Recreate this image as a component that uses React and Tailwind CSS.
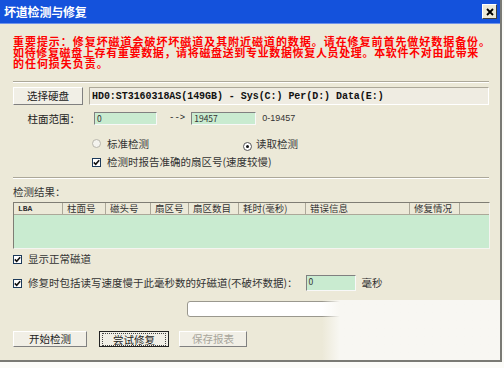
import React from 'react';

const cjk = { fontFamily: '"Noto Sans CJK SC", "Noto Sans", sans-serif' };
const mono = { fontFamily: '"Liberation Mono", "Noto Sans CJK SC", monospace' };

function Check({ checked = true }) {
  return (
    <span className="inline-flex w-[9px] h-[9px] border border-[#1c3a5a] bg-white items-center justify-center shrink-0">
      {checked && (
        <svg width="7" height="7" viewBox="0 0 7 7">
          <path d="M0.8 3.4 L2.7 5.3 L6.2 1.2" stroke="#111" strokeWidth="1.6" fill="none" />
        </svg>
      )}
    </span>
  );
}

function Radio({ on = false }) {
  return (
    <span className={`inline-flex w-[9px] h-[9px] rounded-full border items-center justify-center shrink-0 ${on ? 'border-[#555] bg-white' : 'border-[#b8b6ac] bg-[#f4f3ee]'}`}>
      {on && <span className="w-[3px] h-[3px] rounded-full bg-[#111]" />}
    </span>
  );
}

function XpButton({ children, focus = false, disabled = false, className = '' }) {
  return (
    <div
      className={`flex items-center justify-center bg-[#f1efe6] text-[10.5px] ${
        focus ? 'border border-[#222]' : 'border border-[#fff] border-r-[#808080] border-b-[#808080]'
      } ${disabled ? 'text-[#a8a69c]' : 'text-[#222]'} ${className}`}
    >
      <span className={focus ? 'px-[10px] border border-dotted border-[#444] leading-[11px]' : ''}>{children}</span>
    </div>
  );
}

function Field({ value, className = '' }) {
  return (
    <div className={`bg-[#c9ebd0] border border-t-[#808080] border-l-[#808080] border-r-[#f8f8f8] border-b-[#f8f8f8] text-[8.5px] text-[#333] pl-[2px] leading-[10px] ${className}`}>
      {value}
    </div>
  );
}

const cols = [
  ['LBA', 49],
  ['柱面号', 43],
  ['磁头号', 45],
  ['扇区号', 38],
  ['扇区数目', 50],
  ['耗时(毫秒)', 67],
  ['错误信息', 104],
  ['修复情况', 50],
];

export default function App() {
  return (
    <div className="w-[504px] h-[368px] bg-[#fbfbf8] relative overflow-hidden" style={cjk}>
      <div className="w-[502px] h-[362px] bg-[#ece9d8] border-r-2 border-b-2 border-[#7a7a74] flex flex-col">
        {/* title bar */}
        <div className="h-[24px] bg-[#1452dc] flex items-center justify-between pl-[4px] pr-[3px] border-b border-[#6f93ea] shrink-0">
          <span className="text-white text-[12px] font-bold tracking-[-0.2px]">坏道检测与修复</span>
          <div className="w-[15px] h-[15px] bg-[#ece9d8] border border-[#fff] border-r-[#404040] border-b-[#404040] flex items-center justify-center">
            <svg width="8" height="8" viewBox="0 0 8 8">
              <path d="M1 1 L7 7 M7 1 L1 7" stroke="#000" strokeWidth="1.8" />
            </svg>
          </div>
        </div>

        <div className="flex flex-col pl-[13px] pr-[11px]">
          {/* warning */}
          <div className="mt-[12px] text-[#ff0000] font-bold text-[11px] leading-[11px] tracking-[0.95px] whitespace-nowrap">
            <div>重要提示：修复坏磁道会破坏坏磁道及其附近磁道的数据。请在修复前首先做好数据备份。</div>
            <div className="tracking-[0.65px]">如待修复磁盘上存有重要数据，请将磁盘送到专业数据恢复人员处理。本软件不对由此带来</div>
            <div>的任何损失负责。</div>
          </div>

          <div className="mt-[12px] h-[2px] border-t border-[#aca899] border-b border-b-white" />

          {/* disk row */}
          <div className="mt-[4px] flex gap-[6px] h-[18px]">
            <XpButton className="w-[70px]">选择硬盘</XpButton>
            <div className="flex-1 flex items-center border border-[#aca899] border-r-white border-b-white bg-[#efece2] pl-[2px]">
              <span className="text-[10px] font-bold text-[#111] tracking-[-0.05px]" style={mono}>
                HD0:ST3160318AS(149GB) - Sys(C:) Per(D:) Data(E:)
              </span>
            </div>
          </div>

          {/* cylinder range */}
          <div className="mt-[7px] flex items-center h-[13px] text-[10.5px] text-[#222]">
            <span className="w-[67px] text-right">柱面范围：</span>
            <Field value="0" className="ml-[14px] w-[63px] h-[13px]" />
            <span className="ml-[12px] text-[9px]" style={mono}>--&gt;</span>
            <Field value="19457" className="ml-[6px] w-[65px] h-[13px]" />
            <span className="ml-[6px] text-[9px] text-[#333]" style={{ fontFamily: '"Liberation Sans", sans-serif' }}>0-19457</span>
          </div>

          {/* radios */}
          <div className="mt-[13px] flex items-center h-[12px] text-[10.5px] text-[#333]">
            <span className="ml-[79px]"><Radio /></span>
            <span className="ml-[6px]">标准检测</span>
            <span className="ml-[94px]"><Radio on /></span>
            <span className="ml-[4px]">读取检测</span>
          </div>

          {/* checkbox */}
          <div className="mt-[6px] flex items-center h-[12px] text-[10.5px] text-[#333]">
            <span className="ml-[79px]"><Check /></span>
            <span className="ml-[6px]">检测时报告准确的扇区号(速度较慢)</span>
          </div>

          <div className="mt-[9px] h-[2px] border-t border-[#aca899] border-b border-b-white" />

          {/* results */}
          <div className="mt-[7px] text-[10.5px] text-[#333] leading-[12px]">检测结果：</div>
          <div className="mt-[4px] w-[477px] h-[47px] border border-[#7f7d74] border-r-[#f4f4f0] border-b-[#f4f4f0] bg-[#c9ebd0] flex flex-col">
            <div className="h-[12px] flex bg-[#ece9d8] border-b border-[#aca899] shrink-0">
              {cols.map(([t, w]) => (
                <div
                  key={t}
                  className={`h-full flex items-center pl-[4px] border-r border-[#aca899] text-[9.5px] text-[#333] ${t === 'LBA' ? 'font-bold' : ''}`}
                  style={{ width: w, ...(t === 'LBA' ? mono : {}) }}
                >
                  {t === 'LBA' ? <span className="text-[8px]">LBA</span> : t}
                </div>
              ))}
            </div>
          </div>

          {/* options */}
          <div className="mt-[4px] flex items-center h-[12px] text-[10.5px] text-[#333]">
            <Check />
            <span className="ml-[6px]">显示正常磁道</span>
          </div>
          <div className="mt-[10px] flex items-center h-[16px] text-[10.5px] text-[#333]">
            <Check />
            <span className="ml-[6px]">修复时包括读写速度慢于此毫秒数的好磁道(不破坏数据)：</span>
            <Field value="0" className="ml-[8px] w-[50px] h-[16px]" />
            <span className="ml-[6px]">毫秒</span>
          </div>

          {/* progress */}
          <div className="mt-[10px] ml-[174px] w-[302px] h-[16px] bg-white border border-[#9a988e] rounded-[3px]" />

          {/* buttons */}
          <div className="mt-[14px] flex h-[16px] gap-[12px]">
            <XpButton className="w-[74px]">开始检测</XpButton>
            <XpButton className="w-[70px]" focus>尝试修复</XpButton>
            <XpButton className="w-[68px] ml-[-2px]" disabled>保存报表</XpButton>
          </div>
        </div>
      </div>

      {/* washed-out area of the capture */}
      <div className="absolute left-[322px] top-[300px] w-[178px] h-[60px] bg-gradient-to-r from-transparent from-0% to-[#f8f7f2] to-[10%]" />
    </div>
  );
}
